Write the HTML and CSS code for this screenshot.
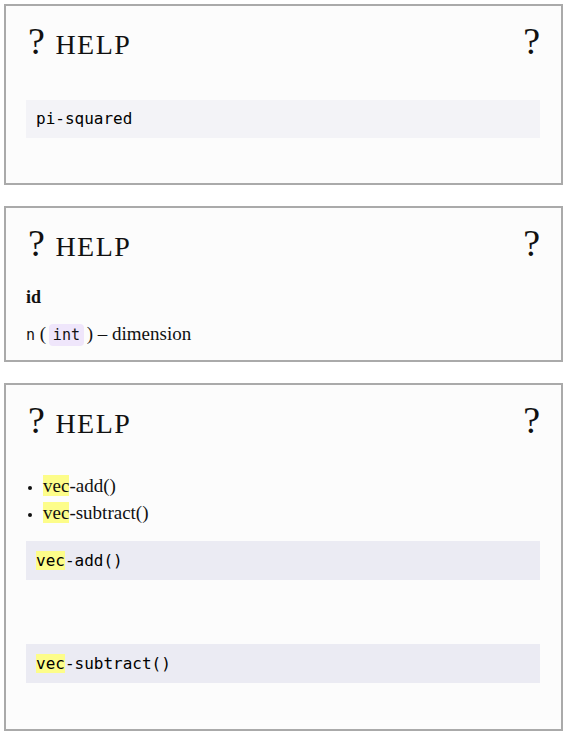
FILE: index.html
```html
<!DOCTYPE html>
<html lang="en">
<head>
  <meta charset="UTF-8">
  <title>Help</title>
  <link rel="stylesheet" href="styles.css">
</head>
<body>
  <div class="help-panel">
    <div class="help-head">
      <div class="help-title"><span class="qmark">?</span> HELP</div>
      <span class="qmark end">?</span>
    </div>
    <div class="code-block light first">pi-squared</div>
  </div>

  <div class="help-panel">
    <div class="help-head">
      <div class="help-title"><span class="qmark">?</span> HELP</div>
      <span class="qmark end">?</span>
    </div>
    <div class="fn-name">id</div>
    <div class="param"><span class="mono">n</span> ( <span class="type-tag">int</span> ) – dimension</div>
  </div>

  <div class="help-panel">
    <div class="help-head">
      <div class="help-title"><span class="qmark">?</span> HELP</div>
      <span class="qmark end">?</span>
    </div>
    <ul class="match-list">
      <li><mark>vec</mark>-add()</li>
      <li><mark>vec</mark>-subtract()</li>
    </ul>
    <div class="code-block"><mark>vec</mark>-add()</div>
    <div class="code-block last"><mark>vec</mark>-subtract()</div>
  </div>
</body>
</html>
```

FILE: styles.css
```css
body {
  margin: 4px;
  font-family: "Liberation Serif", "DejaVu Serif", serif;
  color: #111;
  background: #fff;
}

.help-panel {
  border: 2px solid #aaa;
  background: #fcfcfc;
  padding: 14px 21px 0 20px;
  margin-bottom: 21px;
}

.help-head {
  display: flex;
  justify-content: space-between;
  align-items: baseline;
  height: 42px;
  line-height: 42px;
}

.help-title {
  font-size: 28px;
  letter-spacing: 1.5px;
}

.qmark {
  font-size: 38px;
  letter-spacing: 0;
  padding-left: 2px;
  margin-right: 2px;
}

.qmark.end {
  margin-right: 0;
}

.code-block {
  font-family: "DejaVu Sans Mono", monospace;
  font-size: 16px;
  color: #000;
  background: #ebebf3;
  padding: 10px;
  line-height: 19px;
  margin-top: 15px;
}

.code-block.light {
  background: #f3f3f7;
  line-height: 18px;
}

.code-block.first {
  margin-top: 38px;
  margin-bottom: 45px;
}

.code-block.last {
  margin-top: 64px;
  margin-bottom: 46px;
}

mark {
  background: #fdfd8a;
  color: inherit;
}

.fn-name {
  font-weight: bold;
  font-size: 18px;
  line-height: 24px;
  margin-top: 21px;
}

.param {
  font-size: 19px;
  line-height: 26px;
  margin-top: 12px;
  margin-bottom: 12px;
}

.mono {
  font-family: "DejaVu Sans Mono", monospace;
  font-size: 15px;
}

.type-tag {
  font-family: "DejaVu Sans Mono", monospace;
  font-size: 15px;
  background: #efe6fb;
  border-radius: 4px;
  padding: 2px 4px;
  margin: 0 -2px;
}

.match-list {
  margin: 31px 0 0;
  padding-left: 17px;
  font-size: 19px;
  line-height: 27px;
}

.match-list li::marker {
  font-size: 14px;
}
```
